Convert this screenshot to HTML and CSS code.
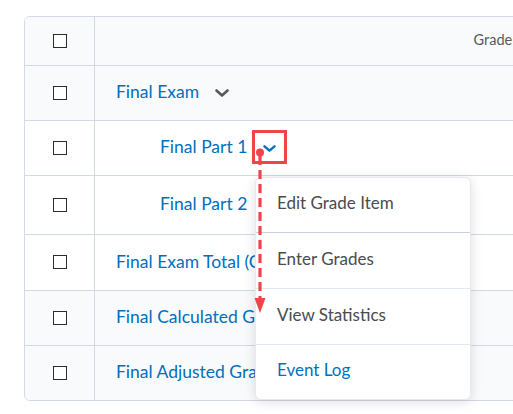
FILE: index.html
```html
<!DOCTYPE html>
<html>
<head>
<meta charset="utf-8">
<link rel="stylesheet" href="styles.css">
</head>
<body>
<div class="page">
  <div class="grid">
    <div class="row head">
      <div class="sel"><span class="cb"></span></div>
      <div class="main center">Grade Item</div>
    </div>
    <div class="row alt">
      <div class="sel"><span class="cb"></span></div>
      <div class="main"><span class="link">Final Exam</span>
        <svg class="chev" width="14" height="8" viewBox="0 0 14 8"><path d="M1.5 1.5 L7 6.5 L12.5 1.5" fill="none" stroke="#565a5c" stroke-width="2.6" stroke-linecap="round" stroke-linejoin="round"/></svg>
      </div>
    </div>
    <div class="row">
      <div class="sel"><span class="cb"></span></div>
      <div class="main indent"><span class="link">Final Part 1</span>
        <svg class="chev blue" width="13" height="7" viewBox="0 0 13 7"><path d="M1.5 1.3 L6.5 5.6 L11.5 1.3" fill="none" stroke="#006fbf" stroke-width="2.4" stroke-linecap="round" stroke-linejoin="round"/></svg>
      </div>
    </div>
    <div class="row tall">
      <div class="sel"><span class="cb"></span></div>
      <div class="main indent"><span class="link">Final Part 2</span></div>
    </div>
    <div class="row mid">
      <div class="sel"><span class="cb"></span></div>
      <div class="main"><span class="link">Final Exam Total (Calculated)</span></div>
    </div>
    <div class="row alt">
      <div class="sel"><span class="cb"></span></div>
      <div class="main"><span class="link">Final Calculated Grade</span></div>
    </div>
    <div class="row alt">
      <div class="sel"><span class="cb"></span></div>
      <div class="main"><span class="link">Final Adjusted Grade</span></div>
    </div>
  </div>

  <div class="menu">
    <div class="item first">Edit Grade Item</div>
    <div class="item">Enter Grades</div>
    <div class="item">View Statistics</div>
    <div class="item blue last">Event Log</div>
  </div>

  <svg class="annot" width="513" height="414" viewBox="0 0 513 414">
    <rect x="253.5" y="131.5" width="32" height="31" fill="none" stroke="#f0444b" stroke-width="3"/>
    <line x1="260" y1="156" x2="260" y2="298" stroke="#f0444b" stroke-width="3.2" stroke-dasharray="9 5"/>
    <circle cx="260" cy="152.5" r="4" fill="#f0444b"/>
    <polygon points="254.5,298 265.5,298 260,313" fill="#f0444b"/>
  </svg>
</div>
</body>
</html>
```

FILE: styles.css
```css
html, body {
  margin: 0;
  padding: 0;
  background: #ffffff;
}

.page {
  position: relative;
  width: 513px;
  height: 414px;
  overflow: hidden;
  font-family: Lato, "Open Sans", sans-serif;
}

.grid {
  margin: 16px 0 0 24px;
  width: 898px;
  border: 1px solid #d3d9e3;
  border-radius: 6px;
  overflow: hidden;
}

.row {
  display: flex;
  height: 54px;
  border-top: 1px solid #d3d9e3;
  background: #ffffff;
}

.row.head {
  height: 48px;
  border-top: none;
  background: #f9fafb;
}

.row.alt {
  background: #f9fafb;
}

.row.tall {
  height: 58px;
}

.row.mid {
  height: 55px;
}

.sel {
  width: 70px;
  flex: none;
  display: flex;
  align-items: center;
  justify-content: center;
  padding-bottom: 1px;
  box-sizing: border-box;
  border-right: 1px solid #d3d9e3;
}

.cb {
  width: 12px;
  height: 12px;
  border: 1px solid #2d2d2d;
  background: #fff;
}

.main {
  flex: 1;
  display: flex;
  align-items: center;
  padding: 0 0 3px 21px;
  font-size: 17.5px;
}

.main.indent {
  padding-left: 65px;
}

.main.center {
  justify-content: center;
  padding-left: 0;
  font-size: 14.5px;
  color: #565a5c;
}

.link {
  color: #006fbf;
}

.chev {
  margin-left: 16px;
  margin-top: 2px;
}

.chev.blue {
  margin-left: 16px;
  margin-top: 3px;
}

.menu {
  position: absolute;
  left: 255px;
  top: 177px;
  width: 214px;
  background: #ffffff;
  border: 1px solid #e6eaf0;
  border-radius: 6px;
  box-shadow: 0 2px 12px rgba(0, 0, 0, 0.13);
}

.item {
  height: 50px;
  display: flex;
  align-items: center;
  padding: 0 0 5px 21px;
  font-size: 17px;
  color: #494c4e;
  border-bottom: 1px solid #e3e9f1;
}

.item.first {
  height: 49px;
  border-bottom: 1px solid #c9d1dc;
}

.item.last {
  border-bottom: none;
  height: 49px;
}

.item.blue {
  color: #006fbf;
}

.annot {
  position: absolute;
  left: 0;
  top: 0;
  pointer-events: none;
}
```
